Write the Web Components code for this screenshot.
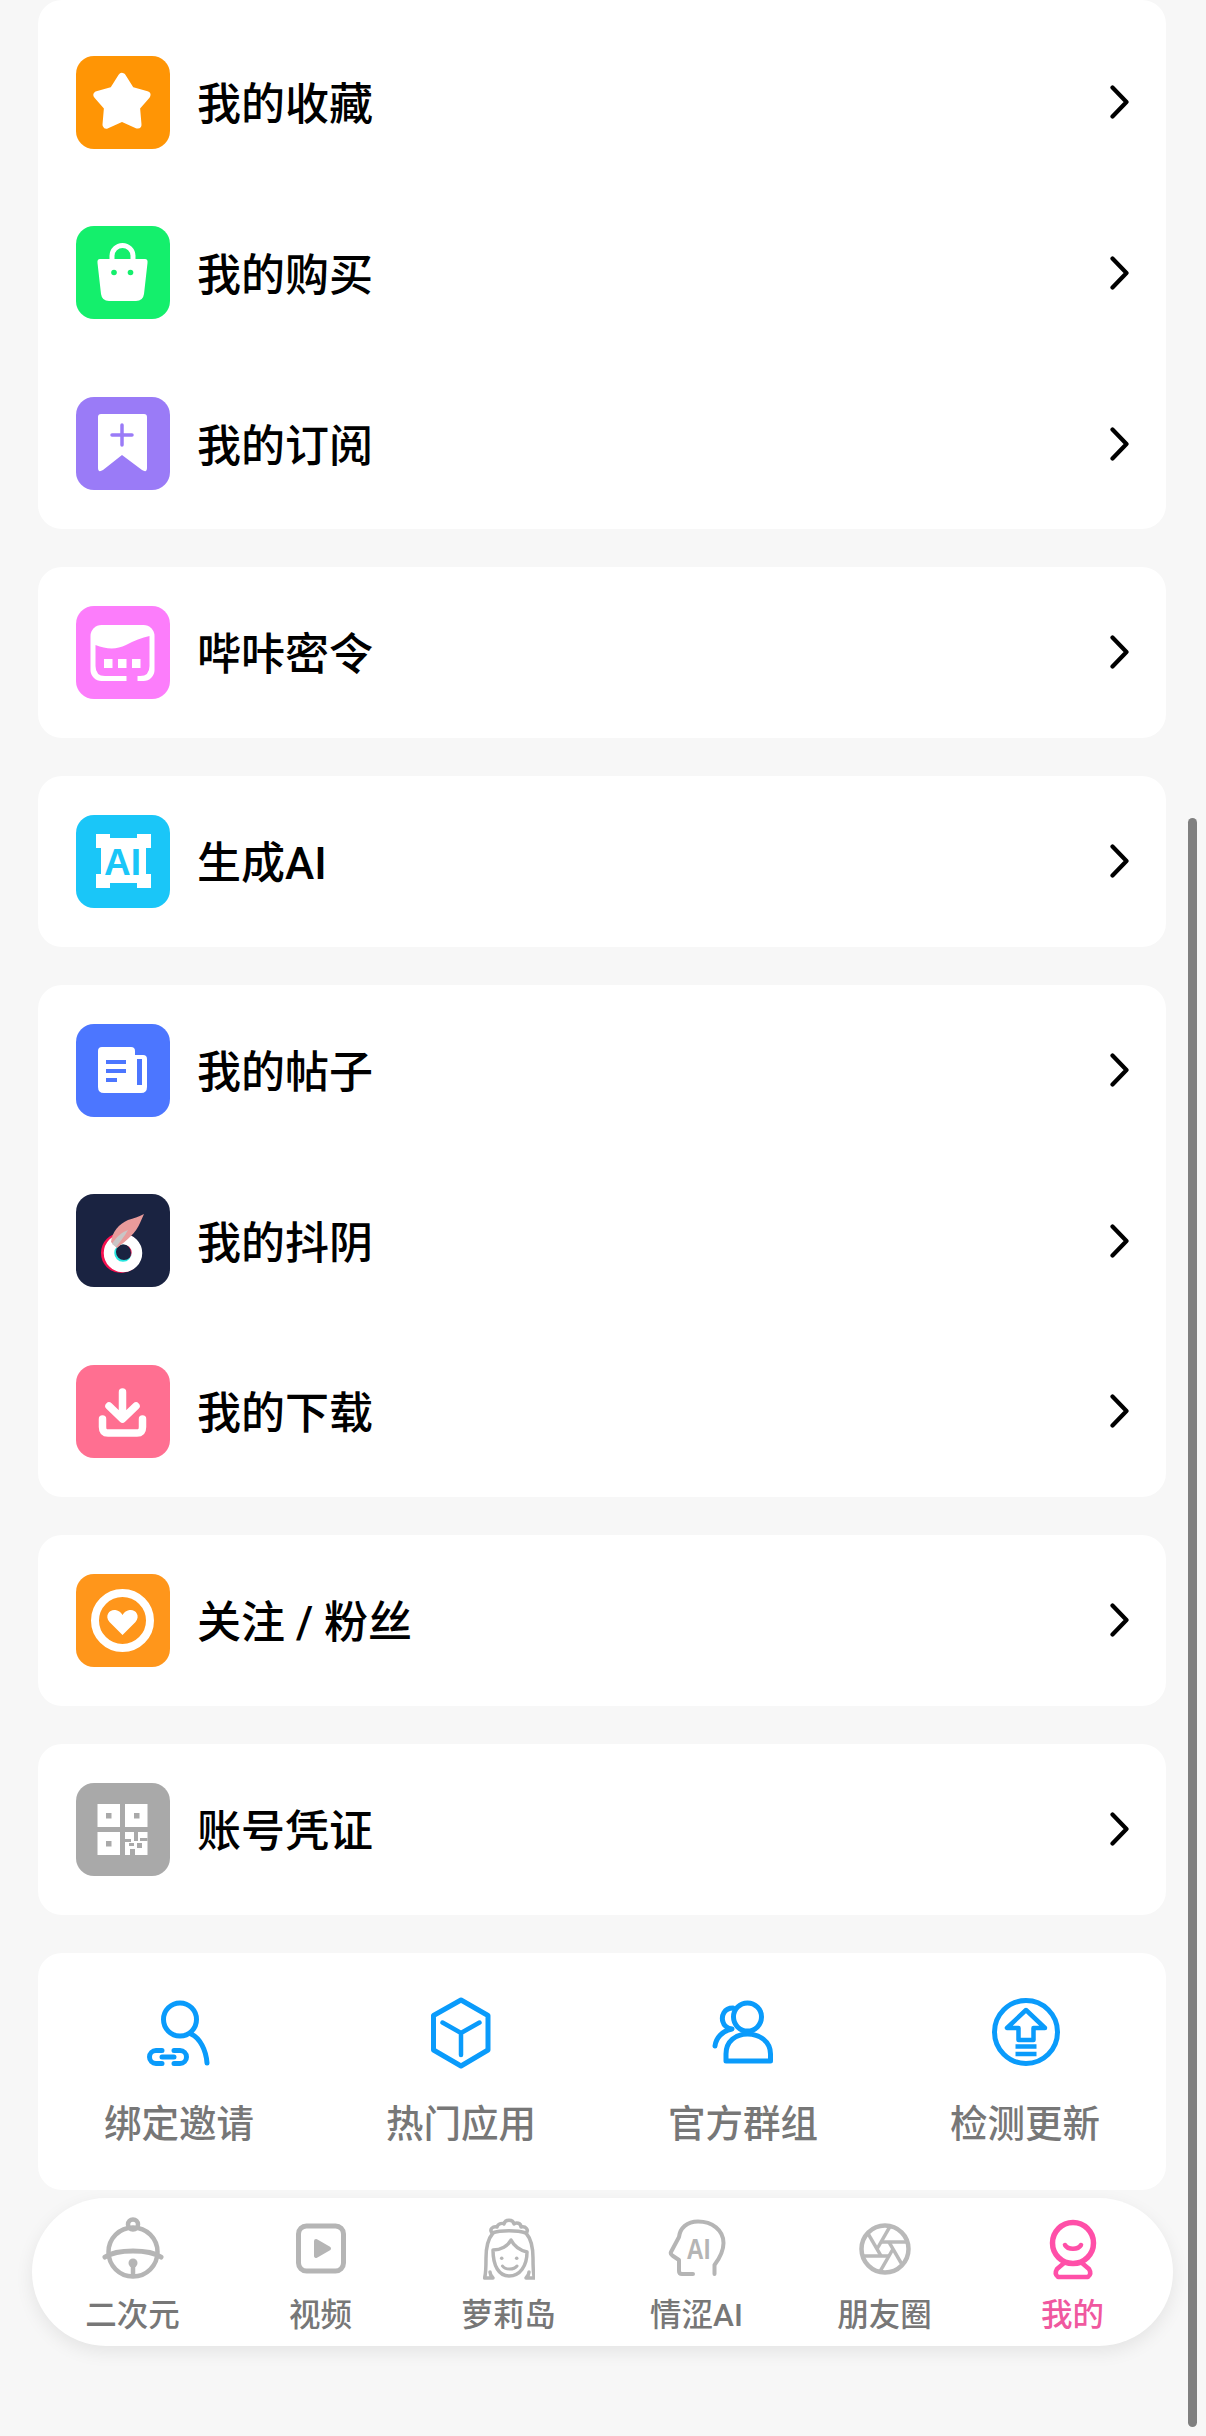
<!DOCTYPE html>
<html lang="zh-CN">
<head>
<meta charset="utf-8">
<title>我的</title>
<style>
html,body{margin:0;padding:0;background:#f7f7f7}
body{font-family:Roboto,"Noto Sans CJK SC",sans-serif}
svg{display:block}
</style>
</head>
<body>
<bk-page>
  <bk-card class="first">
    <bk-row label="我的收藏" color="#ff9505">
      <svg slot="icon" width="94" height="93" viewBox="0 0 94 93"><path d="M46 21 54.5 34.5 70.5 39 60 51 61.5 68.5 46 61.5 30.500 68.5 32 51 21.500 39 37.500 34.500Z" fill="#fff" stroke="#fff" stroke-width="8" stroke-linejoin="round"/></svg>
    </bk-row>
    <bk-row label="我的购买" color="#14ef6c">
      <svg slot="icon" width="94" height="93" viewBox="0 0 94 93"><path d="M36 34V30a10.500 10.500 0 0 1 21 0v4" fill="none" stroke="#fff" stroke-width="5"/><path d="M24 33H69Q72 33 71.500 37L68 68Q67 75 60 75H33Q26 75 25 68L21.500 37Q21 33 24 33Z" fill="#fff"/><circle cx="38" cy="46.500" r="2.800" fill="#14ef6c"/><circle cx="54.500" cy="46.500" r="2.800" fill="#14ef6c"/></svg>
    </bk-row>
    <bk-row label="我的订阅" color="#9a7bf7">
      <svg slot="icon" width="94" height="93" viewBox="0 0 94 93"><path d="M25 17H68Q71 17 71 20V71Q71 76 66 73L46 58 27 73Q22 76 22 71V20Q22 17 25 17Z" fill="#fff"/><path d="M46 28V48M36 38H56" stroke="#9a7bf7" stroke-width="3.500" stroke-linecap="round"/></svg>
    </bk-row>
  </bk-card>
  <bk-card>
    <bk-row label="哔咔密令" color="#fc7dfb">
      <svg slot="icon" width="94" height="93" viewBox="0 0 94 93"><rect x="14.500" y="19" width="64" height="56" rx="11" fill="#fff"/><path d="M19.500 39C30 43 40 44 50 39 58 35 66 31.500 73.500 30V60Q73.500 70 64 70H29Q19.500 70 19.500 60Z" fill="#fc7dfb"/><rect x="50.500" y="68" width="11" height="9" fill="#fc7dfb"/><g fill="#fff"><rect x="28" y="53" width="8.500" height="9"/><rect x="42" y="53" width="8.500" height="9"/><rect x="56" y="53" width="8.500" height="9"/></g></svg>
    </bk-row>
  </bk-card>
  <bk-card>
    <bk-row label="生成AI" color="#1ac6f8">
      <svg slot="icon" width="94" height="93" viewBox="0 0 94 93"><g fill="#fff"><rect x="20" y="19" width="14" height="14"/><rect x="61" y="19" width="14" height="14"/><rect x="20" y="59" width="14" height="14"/><rect x="61" y="59" width="14" height="14"/><rect x="25" y="23" width="45" height="45"/></g><text x="46.500" y="60" text-anchor="middle" font-family="Liberation Sans" font-weight="700" font-size="37" fill="#1ac6f8">AI</text></svg>
    </bk-row>
  </bk-card>
  <bk-card>
    <bk-row label="我的帖子" color="#4c76ff">
      <svg slot="icon" width="94" height="93" viewBox="0 0 94 93"><path d="M26 23H55Q59 23 59 27V31H67Q71 31 71 35V63Q71 69 65 69H28Q22 69 22 63V27Q22 23 26 23Z" fill="#fff"/><path d="M30 38H50M30 47H50M30 56H41" stroke="#4c76ff" stroke-width="4"/><rect x="61" y="35" width="5" height="26" fill="#4c76ff"/></svg>
    </bk-row>
    <bk-row label="我的抖阴" color="#1a2341">
      <svg slot="icon" width="94" height="93" viewBox="0 0 94 93"><circle cx="45" cy="59" r="15" fill="none" stroke="#f5104f" stroke-width="10"/><circle cx="48" cy="58" r="12.500" fill="none" stroke="#27e6df" stroke-width="9"/><circle cx="47" cy="59" r="14" fill="none" stroke="#fff" stroke-width="10.500"/><path d="M35 48C36 38 43 30 52 26 58 24 62 23 68 20L64 29C60 39 51 46 41 54Z" fill="#e99b9b"/><path d="M36 50C40 43 46 38 52 36 48 43 44 48 40 53Z" fill="#c9c6c6"/></svg>
    </bk-row>
    <bk-row label="我的下载" color="#ff6f91">
      <svg slot="icon" width="94" height="93" viewBox="0 0 94 93"><path d="M46.500 27V52M33 41 46.500 54 60 41" fill="none" stroke="#fff" stroke-width="7.500" stroke-linecap="round" stroke-linejoin="round"/><path d="M26.500 54V62Q26.500 68 32 68H61Q66.500 68 66.500 62V54" fill="none" stroke="#fff" stroke-width="7.500" stroke-linecap="round"/></svg>
    </bk-row>
  </bk-card>
  <bk-card>
    <bk-row label="关注 / 粉丝" color="#ff961b">
      <svg slot="icon" width="94" height="93" viewBox="0 0 94 93"><circle cx="46.500" cy="46.500" r="27.500" fill="none" stroke="#fff" stroke-width="8"/><path d="M46.500 61 33.500 48C28 41 34 35 39.500 36 43 36.500 45 38.500 46.500 41 48 38.500 50 36.500 53.500 36 59 35 65 41 59.500 48Z" fill="#fff"/></svg>
    </bk-row>
  </bk-card>
  <bk-card>
    <bk-row label="账号凭证" color="#a9a9a9">
      <svg slot="icon" width="94" height="93" viewBox="0 0 94 93"><g fill="#fff"><rect x="21.500" y="21" width="22.500" height="23"/><rect x="49" y="21" width="22.500" height="23"/><rect x="21.500" y="49" width="22.500" height="23"/><rect x="49" y="49" width="22.500" height="23"/></g><g fill="#a9a9a9"><rect x="30" y="30" width="5.500" height="5.500"/><rect x="58" y="30" width="5.500" height="5.500"/><rect x="30" y="58" width="5.500" height="5.500"/><rect x="49" y="56" width="6" height="3"/><rect x="58" y="49" width="4" height="9"/><rect x="64" y="55" width="7.500" height="3"/><rect x="61" y="60" width="5" height="5"/><rect x="53" y="60" width="5" height="3"/><rect x="54" y="66" width="5" height="6"/></g></svg>
    </bk-row>
  </bk-card>
  <bk-card>
    <bk-actions>
      <bk-action label="绑定邀请">
        <svg width="64" height="76" viewBox="0 0 64 76" fill="none" stroke="#0a9bfb" stroke-width="5" stroke-linecap="round"><g transform="translate(-3 4)"><circle cx="36" cy="19.500" r="16.500"/><path d="M47 34C56 38 62 50 63 63"/><path d="M18 50.500H12a6.500 6.500 0 0 0 0 13H18M30 50.500H36a6.500 6.500 0 0 1 0 13H30M18 57H30"/></g></svg>
      </bk-action>
      <bk-action label="热门应用">
        <svg width="66" height="76" viewBox="0 0 66 76" fill="none" stroke="#0a9bfb" stroke-width="5" stroke-linejoin="round" stroke-linecap="round"><path d="M33 4 60 19.500V54L33 70 5.500 54V19.500Z"/><path d="M14.500 26.500 33 37 51.500 26.500M33 37V59" stroke-width="4.500"/></svg>
      </bk-action>
      <bk-action label="官方群组">
        <svg width="70" height="76" viewBox="0 0 70 76" fill="none" stroke="#0a9bfb" stroke-width="5" stroke-linecap="round" stroke-linejoin="round"><ellipse cx="39.500" cy="21" rx="14" ry="14"/><path d="M18 65V58C18 45 28 38 39.500 38S62.500 45 62.500 58V65Z"/><path d="M25 12C16 12 13 20 15 26 16 30 19 32 24 33 14 35 8 42 7 50"/></svg>
      </bk-action>
      <bk-action label="检测更新">
        <svg width="72" height="76" viewBox="0 0 72 76" fill="none" stroke="#0a9bfb" stroke-width="5" stroke-linejoin="round"><g transform="translate(1 -2)"><circle cx="36" cy="38" r="31.500"/><path d="M36 16 17 34H28.500V46H43.500V34H55Z" stroke-width="4.500"/><path d="M25.500 52.500H46.500M25.500 60H46.500" stroke-width="4.500"/></g></svg>
      </bk-action>
    </bk-actions>
  </bk-card>
  <bk-tabbar>
    <bk-tab label="二次元">
      <svg width="64" height="66" viewBox="0 0 64 66" fill="none" stroke="#b5b5b5" stroke-width="4.500" stroke-linecap="round"><circle cx="32" cy="36" r="24.500"/><circle cx="32" cy="8.500" r="5"/><path d="M4 41C16 33 48 33 60 41" stroke-width="5"/><path d="M32 50V59"/><circle cx="32" cy="47" r="4.500" fill="#b5b5b5" stroke="none"/></svg>
    </bk-tab>
    <bk-tab label="视频">
      <svg width="52" height="66" viewBox="0 0 52 66" fill="none" stroke="#b5b5b5" stroke-width="5"><rect x="3.500" y="10" width="45" height="45" rx="8"/><path d="M21 25 34 32.500 21 40Z" fill="#b5b5b5" stroke-width="4" stroke-linejoin="round"/></svg>
    </bk-tab>
    <bk-tab label="萝莉岛">
      <svg width="52" height="66" viewBox="0 0 52 66" fill="none" stroke="#b5b5b5" stroke-width="3.500" stroke-linecap="round" stroke-linejoin="round"><path d="M9 17C6 13 10 10 14 11 15 7 20 7 21 8 22 3 30 3 31 8 33 6 38 7 38 11 43 10 46 14 43 17 34 14 18 14 9 17Z"/><path d="M10 17C4 24 3 32 3 42 3 52 3 58 1.500 62H10C8 60 7 58 7 56"/><path d="M43 17C49 24 50 32 50 42 50 52 50 58 51.500 62H43C45 60 46 58 46 56"/><path d="M28 24C25 30 18 34 10 34 10 50 16 60 26 60 37 60 44 50 44 36 36 34 31 30 28 24Z"/><path d="M19.500 50C22 54 31 54 34 50" stroke-width="3"/><circle cx="18.700" cy="42.300" r="1.800" fill="#b5b5b5" stroke="none"/><circle cx="33.700" cy="42.300" r="1.800" fill="#b5b5b5" stroke="none"/></svg>
    </bk-tab>
    <bk-tab label="情涩AI">
      <svg width="60" height="66" viewBox="0 0 60 66" fill="none" stroke="#b5b5b5" stroke-width="4" stroke-linecap="round" stroke-linejoin="round"><g transform="translate(0 3)"><path d="M47.500 55V46C52 40 56.500 33 56.500 24 56.500 11 45 2.500 31 2.500 20 2.500 13 9 12 18L4 33Q3 35 6 37L12 41V52Q12 55 15 55H26"/><text x="31.500" y="40" text-anchor="middle" font-family="Liberation Sans" font-weight="700" font-size="29" textLength="24" lengthAdjust="spacingAndGlyphs" fill="#b5b5b5" stroke="none">AI</text></g></svg>
    </bk-tab>
    <bk-tab label="朋友圈">
      <svg width="54" height="66" viewBox="-27 -33 54 66" fill="none" stroke="#b9b9b9" stroke-width="4.500"><circle r="23.500"/><g stroke-width="3.500"><path d="M8 0-5.200 22.900"/><path d="M8 0-5.200 22.900" transform="rotate(60)"/><path d="M8 0-5.200 22.900" transform="rotate(120)"/><path d="M8 0-5.200 22.900" transform="rotate(180)"/><path d="M8 0-5.200 22.900" transform="rotate(240)"/><path d="M8 0-5.200 22.900" transform="rotate(300)"/></g></svg>
    </bk-tab>
    <bk-tab label="我的" active>
      <svg width="50" height="66" viewBox="0 0 50 66" fill="none" stroke="#ff4fa8" stroke-width="5.500" stroke-linecap="round" stroke-linejoin="round"><g transform="translate(0 3)"><circle cx="25" cy="24" r="20.500"/><path d="M17 26C20 31 30 31 33 26" stroke-width="4.500"/><path d="M16 44 9 50Q6 55 10 58H40Q44 55 41 50L34 44" stroke-width="4.500"/></g></svg>
    </bk-tab>
  </bk-tabbar>
  <bk-scrollbar></bk-scrollbar>
</bk-page>
<script>
function define(name, css, html, extra){
  customElements.define(name, class extends HTMLElement{
    constructor(){
      super();
      const root=this.attachShadow({mode:'open'});
      const t=document.createElement('template');
      t.innerHTML='<style>'+css+'</style>'+(typeof html==='function'?html(this):html);
      root.appendChild(t.content.cloneNode(true));
    }
    connectedCallback(){ if(extra) extra(this); }
  });
}
define('bk-page',
 ':host{display:flex;flex-direction:column;gap:38.2px;position:relative;box-sizing:border-box;width:1206px;height:2436px;overflow:hidden;padding:0 40px 0 38px;background:#f7f7f7;font-family:Roboto,"Noto Sans CJK SC",sans-serif}',
 '<slot></slot>');
define('bk-card',
 ':host{display:block;background:#fff;border-radius:24px}:host(.first){padding-top:17px}',
 '<slot></slot>');
define('bk-row',
 ':host{display:flex;align-items:center;height:170.67px;padding:0 37px 0 38px;box-sizing:border-box}'+
 '.ic{width:94px;height:93px;border-radius:18px;flex:none;overflow:hidden}'+
 '.lb{flex:1;margin-left:27px;padding-top:6px;font-size:44px;font-weight:500;color:#000;line-height:60px;white-space:pre}'+
 '.ch{flex:none}',
 el=>'<div class="ic"><slot name="icon"></slot></div><div class="lb"></div>'+
 '<svg class="ch" width="19" height="34" viewBox="0 0 19 34" fill="none" stroke="#000" stroke-width="4.200" stroke-linecap="round" stroke-linejoin="round"><path d="M2.500 2.500 16.500 17 2.500 31.500"/></svg>',
 el=>{el.shadowRoot.querySelector('.ic').style.background=el.getAttribute('color');el.shadowRoot.querySelector('.lb').textContent=el.getAttribute('label');});
define('bk-actions',
 ':host{display:grid;grid-template-columns:repeat(4,1fr);padding:43px 0 41px}',
 '<slot></slot>');
define('bk-action',
 ':host{display:flex;flex-direction:column;align-items:center}'+
 '.i{height:76px;display:flex;align-items:center;justify-content:center}'+
 '.t{margin-top:27px;font-size:37.500px;line-height:50px;color:#777;font-weight:500}',
 el=>'<div class="i"><slot></slot></div><div class="t"></div>',
 el=>{el.shadowRoot.querySelector('.t').textContent=el.getAttribute('label');});
define('bk-tabbar',
 ':host{display:grid;grid-template-columns:repeat(6,1fr);box-sizing:border-box;width:1141px;height:148px;margin:-30.2px 0 0 -6px;padding:18px 6.500px 0;background:#fff;border-radius:74px;box-shadow:0 6px 18px rgba(0,0,0,.08);position:relative}',
 '<slot></slot>');
define('bk-tab',
 ':host{display:flex;flex-direction:column;align-items:center}'+
 '.i{height:66px;display:flex;align-items:center;justify-content:center}'+
 '.t{margin-top:14px;font-size:31.500px;line-height:40px;color:#777;font-weight:500}'+
 ':host([active]) .t{color:#f0589f}',
 el=>'<div class="i"><slot></slot></div><div class="t"></div>',
 el=>{el.shadowRoot.querySelector('.t').textContent=el.getAttribute('label');});
define('bk-scrollbar',
 ':host{position:absolute;left:1188px;top:818px;width:9px;height:1609px;border-radius:5px;background:#808080}',
 '');
</script>
</body>
</html>
